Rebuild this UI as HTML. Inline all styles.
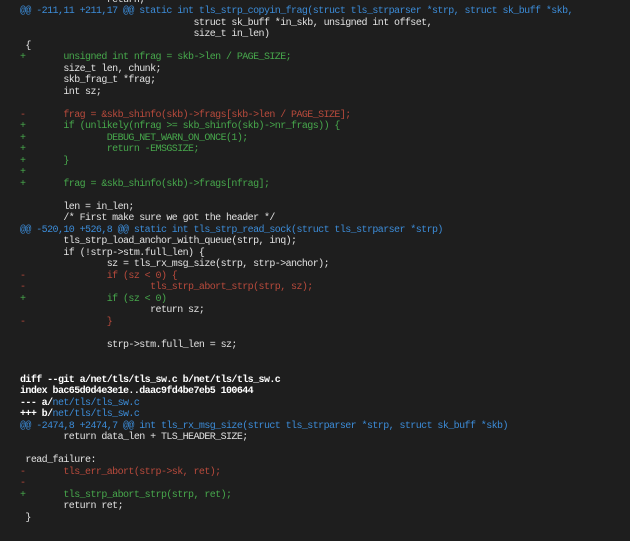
<!DOCTYPE html>
<html><head><meta charset="utf-8"><style>
html,body{margin:0;padding:0;background:#1e1e1e;width:630px;height:541px;overflow:hidden}
pre{margin:0;position:absolute;left:20px;top:-5.5px;font-family:"Liberation Mono",monospace;font-size:10px;letter-spacing:-0.58px;line-height:11.52px;color:#e2e2e2;white-space:pre}
.b{color:#3c8cd8}.g{color:#47a84c}.r{color:#b84a3c}.h{color:#ffffff;font-weight:bold}
</style></head><body><pre>                return;
<span class="b">@@ -211,11 +211,17 @@ static int tls_strp_copyin_frag(struct tls_strparser *strp, struct sk_buff *skb,</span>
                                struct sk_buff *in_skb, unsigned int offset,
                                size_t in_len)
 {
<span class="g">+       unsigned int nfrag = skb-&gt;len / PAGE_SIZE;</span>
        size_t len, chunk;
        skb_frag_t *frag;
        int sz;

<span class="r">-       frag = &amp;skb_shinfo(skb)-&gt;frags[skb-&gt;len / PAGE_SIZE];</span>
<span class="g">+       if (unlikely(nfrag &gt;= skb_shinfo(skb)-&gt;nr_frags)) {</span>
<span class="g">+               DEBUG_NET_WARN_ON_ONCE(1);</span>
<span class="g">+               return -EMSGSIZE;</span>
<span class="g">+       }</span>
<span class="g">+</span>
<span class="g">+       frag = &amp;skb_shinfo(skb)-&gt;frags[nfrag];</span>

        len = in_len;
        /* First make sure we got the header */
<span class="b">@@ -520,10 +526,8 @@ static int tls_strp_read_sock(struct tls_strparser *strp)</span>
        tls_strp_load_anchor_with_queue(strp, inq);
        if (!strp-&gt;stm.full_len) {
                sz = tls_rx_msg_size(strp, strp-&gt;anchor);
<span class="r">-               if (sz &lt; 0) {</span>
<span class="r">-                       tls_strp_abort_strp(strp, sz);</span>
<span class="g">+               if (sz &lt; 0)</span>
                        return sz;
<span class="r">-               }</span>

                strp-&gt;stm.full_len = sz;


<span class="h">diff --git a/net/tls/tls_sw.c b/net/tls/tls_sw.c</span>
<span class="h">index bac65d0d4e3e1e..daac9fd4be7eb5 100644</span>
<span class="h">--- a/</span><span class="b">net/tls/tls_sw.c</span>
<span class="h">+++ b/</span><span class="b">net/tls/tls_sw.c</span>
<span class="b">@@ -2474,8 +2474,7 @@ int tls_rx_msg_size(struct tls_strparser *strp, struct sk_buff *skb)</span>
        return data_len + TLS_HEADER_SIZE;

 read_failure:
<span class="r">-       tls_err_abort(strp-&gt;sk, ret);</span>
<span class="r">-</span>
<span class="g">+       tls_strp_abort_strp(strp, ret);</span>
        return ret;
 }
</pre></body></html>
